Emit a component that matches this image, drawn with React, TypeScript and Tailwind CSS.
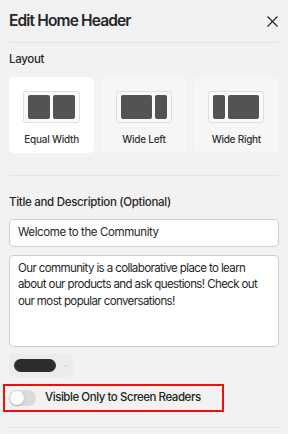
import { X, ChevronDown } from "lucide-react";

type Kind = "equal" | "left" | "right";

function LayoutIcon({ kind }: { kind: Kind }) {
  const a = kind === "equal" ? "w-[22px]" : kind === "left" ? "w-[31px]" : "w-[12px]";
  const b = kind === "equal" ? "w-[22px]" : kind === "left" ? "w-[12px]" : "w-[31px]";
  return (
    <div className="flex gap-[3px] px-[4px] py-[3px] border border-[#dedede] rounded-[3px] bg-[#f9f9f9]">
      <div className={`${a} h-[24px] bg-[#535353] rounded-[2px]`}></div>
      <div className={`${b} h-[24px] bg-[#535353] rounded-[2px]`}></div>
    </div>
  );
}

const layouts: { kind: Kind; label: string; active: boolean }[] = [
  { kind: "equal", label: "Equal Width", active: true },
  { kind: "left", label: "Wide Left", active: false },
  { kind: "right", label: "Wide Right", active: false },
];

export default function App() {
  return (
    <div className="w-[288px] h-[434px] bg-[#f2f2f2] px-[9px] text-[#262626] font-['Inter','Liberation_Sans',sans-serif] overflow-hidden">
      {/* header */}
      <div className="flex items-center justify-between h-[43px] border-b border-[#e5e5e5]">
        <h1 className="text-[15.5px] font-semibold tracking-[-0.85px]">Edit Home Header</h1>
        <X size={19} strokeWidth={1.4} className="mr-[-3px] text-[#222]" />
      </div>

      <div className="text-[11.5px] font-medium tracking-[-0.3px] mt-[8px] h-[16px] leading-[16px]">Layout</div>

      <div className="flex gap-[7px] mt-[10px]">
        {layouts.map((l) => (
          <div
            key={l.kind}
            className={`flex-1 h-[76px] rounded-[5px] flex flex-col items-center pt-[14px] ${
              l.active ? "bg-white" : "bg-[#f6f6f6]"
            }`}
          >
            <LayoutIcon kind={l.kind} />
            <span className="text-[10px] font-medium tracking-[-0.25px] mt-[9px] text-[#333]">{l.label}</span>
          </div>
        ))}
      </div>

      <div className="border-b border-[#e5e5e5] mt-[22px]"></div>

      <div className="text-[11.5px] font-medium tracking-[-0.3px] mt-[18px] h-[17px] leading-[17px]">
        Title and Description (Optional)
      </div>

      <div className="mt-[8px] h-[28px] bg-white border border-[#cdcdcd] rounded-[4px] px-[8px] flex items-center text-[11.5px] tracking-[-0.4px]">
        Welcome to the Community
      </div>

      <div className="mt-[8px] h-[92px] bg-white border border-[#cdcdcd] rounded-[4px] px-[8px] pt-[4px] text-[11.5px] tracking-[-0.6px] leading-[16.3px]">
        Our community is a collaborative place to learn about our products and ask questions! Check out our most popular conversations!
      </div>

      <div className="mt-[7px] w-[64px] h-[23px] bg-[#ececec] rounded-[4px] flex items-center pl-[5px] gap-[6px]">
        <div className="w-[42px] h-[13px] rounded-full bg-[#2d2d2d]"></div>
        <ChevronDown size={8} strokeWidth={1.5} className="text-[#b5b5b5]" />
      </div>

      <div className="-ml-[6px] mt-[7px] w-[221px] h-[28px] border-2 border-[#f20d0d] flex items-center pl-[4px] gap-[9px]">
        <div className="w-[27px] h-[16px] rounded-full bg-[#dadada] p-[1px] flex items-center">
          <div className="w-[14px] h-[14px] rounded-full bg-white shadow-[0_1px_2px_rgba(0,0,0,0.25)]"></div>
        </div>
        <span className="text-[11.5px] font-medium tracking-[-0.45px] text-[#222]">Visible Only to Screen Readers</span>
      </div>

      <div className="border-b border-[#e5e5e5] mt-[15px]"></div>
    </div>
  );
}
